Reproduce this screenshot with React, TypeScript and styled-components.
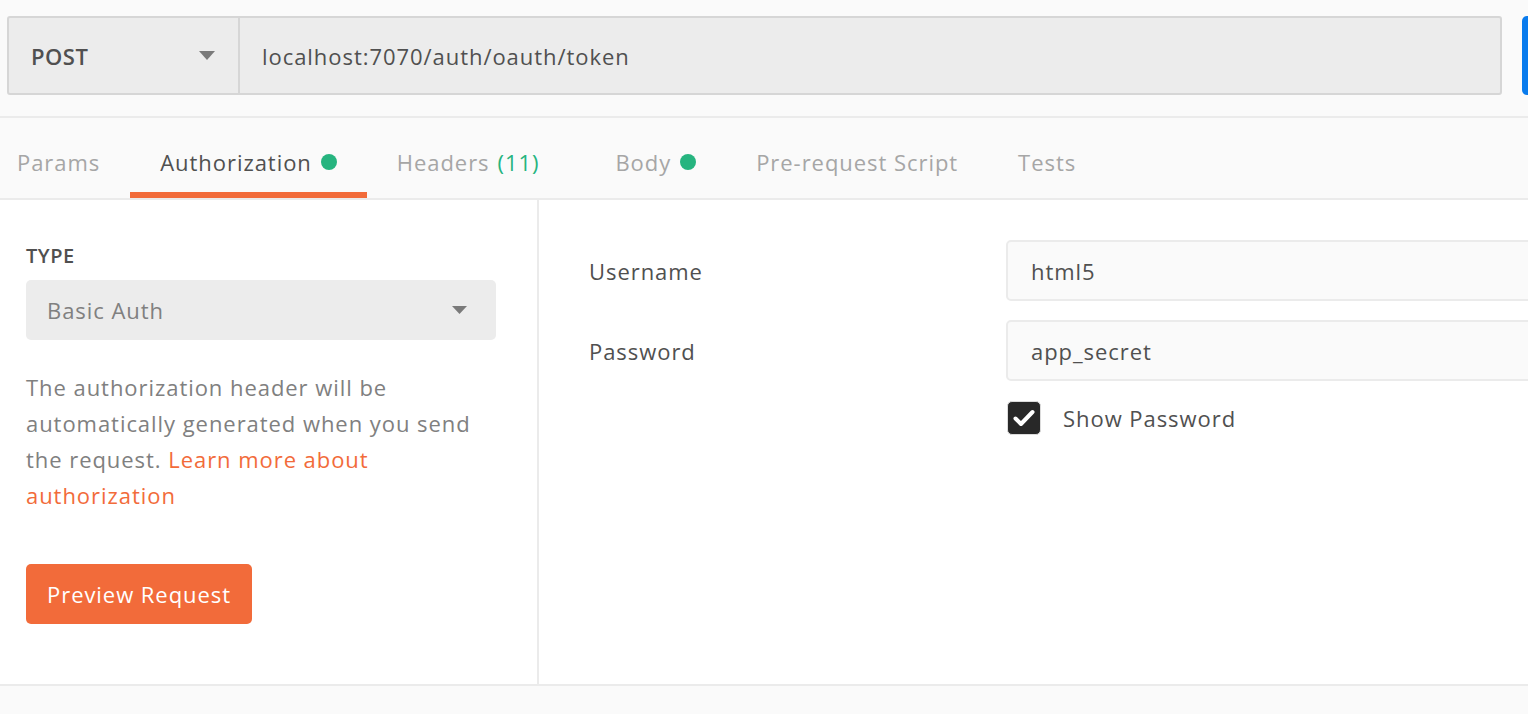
import { createGlobalStyle } from "styled-components";
import styled from "styled-components";

const GlobalStyle = createGlobalStyle`
  html, body {
    margin: 0;
    padding: 0;
    background: #fafafa;
    overflow: hidden;
  }

  body {
    font-family: "Open Sans", "Noto Sans", sans-serif;
    letter-spacing: 0.95px;
    color: #505050;
  }
`;

const Page = styled.div`
  width: 1528px;
  height: 714px;
  overflow: hidden;
  background: #fafafa;
`;

const TopBar = styled.div`
  display: flex;
  align-items: flex-start;
  gap: 20px;
  height: 118px;
  box-sizing: border-box;
  padding: 16px 0 0 7px;
  border-bottom: 2px solid #ebebeb;
`;

const RequestBar = styled.div`
  display: flex;
  flex: 0 0 1495px;
  height: 79px;
  box-sizing: border-box;
  border: 2px solid #d6d6d6;
  border-radius: 3px;
  background: #ececec;
`;

const Method = styled.div`
  display: flex;
  align-items: center;
  justify-content: space-between;
  width: 231px;
  box-sizing: border-box;
  padding: 0 23px 0 22px;
  border-right: 2px solid #d6d6d6;
  font-size: 22px;
  font-weight: 600;
  letter-spacing: 0.5px;
  color: #505050;
`;

const Url = styled.div`
  display: flex;
  align-items: center;
  padding-left: 22px;
  font-size: 22px;
  color: #505050;
`;

const SendButton = styled.div`
  flex: 0 0 120px;
  height: 79px;
  border-radius: 5px;
  background: #097bed;
`;

const Tabs = styled.nav`
  display: flex;
  height: 82px;
  box-sizing: border-box;
  border-bottom: 2px solid #ebebeb;
`;

const Tab = styled.div<{ $active?: boolean; $first?: boolean }>`
  display: flex;
  align-items: center;
  box-sizing: border-box;
  padding: 14px 30px 0 ${({ $first }) => ($first ? "17px" : "30px")};
  font-size: 22px;
  color: ${({ $active }) => ($active ? "#505050" : "#a6a6a6")};
  border-bottom: 6px solid ${({ $active }) => ($active ? "#f26b3a" : "transparent")};
`;

const Dot = styled.span`
  width: 16px;
  height: 16px;
  margin-left: 9px;
  border-radius: 50%;
  background: #26b47f;
`;

const Count = styled.span`
  margin: 0 16px 0 8px;
  color: #26b47f;
`;

const Content = styled.div`
  display: flex;
  height: 486px;
  box-sizing: border-box;
  background: #ffffff;
  border-bottom: 2px solid #ebebeb;
`;

const Sidebar = styled.aside`
  display: flex;
  flex-direction: column;
  align-items: flex-start;
  flex: 0 0 539px;
  box-sizing: border-box;
  padding: 42px 41px 0 26px;
  border-right: 2px solid #ebebeb;
`;

const TypeLabel = styled.div`
  font-size: 20px;
  font-weight: 600;
  letter-spacing: 0.5px;
  line-height: 28px;
  color: #505050;
`;

const Select = styled.div`
  display: flex;
  align-items: center;
  justify-content: space-between;
  align-self: stretch;
  height: 60px;
  margin-top: 10px;
  box-sizing: border-box;
  padding: 0 29px 0 21px;
  border-radius: 5px;
  background: #ececec;
  font-size: 22px;
  color: #808080;
`;

const Description = styled.p`
  margin: 29px 0 0;
  font-size: 22px;
  line-height: 36px;
  color: #808080;
`;

const LearnLink = styled.a`
  color: #f26b3a;
  text-decoration: none;
`;

const PreviewButton = styled.button`
  margin-top: 51px;
  height: 60px;
  padding: 0 21px;
  border: none;
  border-radius: 5px;
  background: #f26b3a;
  color: #ffffff;
  font-family: inherit;
  font-size: 22px;
  letter-spacing: inherit;
`;

const Form = styled.section`
  display: grid;
  grid-template-columns: 417px 620px;
  grid-auto-rows: min-content;
  row-gap: 19px;
  align-items: center;
  padding: 40px 0 0 50px;
`;

const FieldLabel = styled.label`
  font-size: 22px;
  color: #505050;
`;

const Input = styled.div`
  display: flex;
  align-items: center;
  height: 61px;
  box-sizing: border-box;
  padding-left: 23px;
  border: 2px solid #ebebeb;
  border-radius: 5px;
  background: #fafafa;
  font-size: 22px;
  color: #505050;
`;

const CheckRow = styled.div`
  grid-column: 2;
  display: flex;
  align-items: center;
  gap: 22px;
  margin-top: 1px;
  font-size: 22px;
  color: #505050;
`;

const Checkbox = styled.span`
  display: flex;
  align-items: center;
  justify-content: center;
  width: 34px;
  height: 34px;
  margin-left: 1px;
  box-sizing: border-box;
  border: 1px solid #dcdcdc;
  border-radius: 5px;
  background: #282828;
`;

function Caret({ width, height }: { width: number; height: number }) {
  return (
    <svg width={width} height={height} viewBox={`0 0 ${width} ${height}`}>
      <polygon points={`0,0 ${width},0 ${width / 2},${height}`} fill="#7a7a7a" />
    </svg>
  );
}

export default function App() {
  return (
    <Page>
      <GlobalStyle />
      <TopBar>
        <RequestBar>
          <Method>
            POST
            <Caret width={16} height={9} />
          </Method>
          <Url>localhost:7070/auth/oauth/token</Url>
        </RequestBar>
        <SendButton />
      </TopBar>

      <Tabs>
        <Tab $first>Params</Tab>
        <Tab $active>
          Authorization
          <Dot />
        </Tab>
        <Tab>
          Headers
          <Count>(11)</Count>
        </Tab>
        <Tab>
          Body
          <Dot />
        </Tab>
        <Tab>Pre-request Script</Tab>
        <Tab>Tests</Tab>
      </Tabs>

      <Content>
        <Sidebar>
          <TypeLabel>TYPE</TypeLabel>
          <Select>
            Basic Auth
            <Caret width={15} height={8} />
          </Select>
          <Description>
            The authorization header will be automatically generated when you
            send the request. <LearnLink href="#">Learn more about authorization</LearnLink>
          </Description>
          <PreviewButton>Preview Request</PreviewButton>
        </Sidebar>

        <Form>
          <FieldLabel>Username</FieldLabel>
          <Input>html5</Input>
          <FieldLabel>Password</FieldLabel>
          <Input>app_secret</Input>
          <CheckRow>
            <Checkbox>
              <svg width="22" height="18" viewBox="0 0 22 18">
                <path
                  d="M2.5 9.5 L8 15 L19.5 3"
                  fill="none"
                  stroke="#ffffff"
                  strokeWidth="4"
                  strokeLinecap="round"
                  strokeLinejoin="round"
                />
              </svg>
            </Checkbox>
            Show Password
          </CheckRow>
        </Form>
      </Content>
    </Page>
  );
}
